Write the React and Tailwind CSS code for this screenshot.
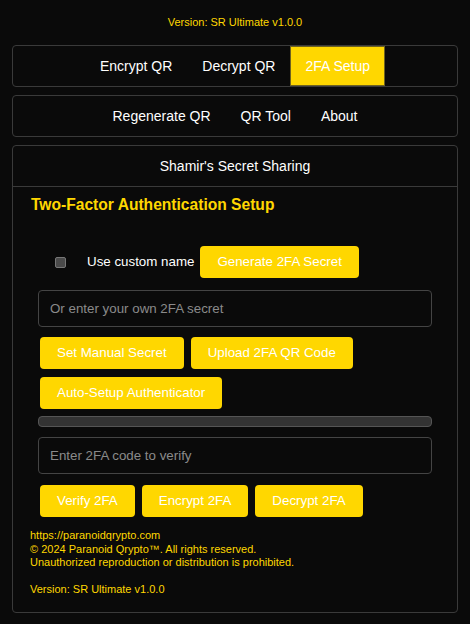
import React, { useState } from 'react';

const YELLOW = 'bg-[#ffd700]';

const NavTab = ({ label, active, onClick }) => (
  <button
    onClick={onClick}
    className={`h-full px-[14px] text-[14px] text-white border ${
      active ? `${YELLOW} border-[#6e6220]` : 'bg-transparent border-transparent'
    }`}
  >
    {label}
  </button>
);

const ActionButton = ({ children }) => (
  <button className={`h-[32px] px-[17px] rounded-[4px] ${YELLOW} text-white text-[13.33px]`}>
    {children}
  </button>
);

const App = () => {
  const [tab, setTab] = useState('2FA Setup');
  const [useCustom, setUseCustom] = useState(false);
  const [secret, setSecret] = useState('');
  const [code, setCode] = useState('');

  return (
    <div className="min-h-screen bg-[#0a0a0a] px-[12px] pb-[12px] font-['Liberation_Sans',Arial,sans-serif]">
      <div className="h-[45px] flex items-center justify-center text-[11px] text-[#ffd700]">
        Version: SR Ultimate v1.0.0
      </div>

      {/* top navs */}
      <div className="h-[42px] border border-[#3a3a3a] rounded-[4px] flex justify-center">
        {['Encrypt QR', 'Decrypt QR', '2FA Setup'].map((t) => (
          <NavTab key={t} label={t} active={tab === t} onClick={() => setTab(t)} />
        ))}
      </div>
      <div className="mt-[8px] h-[42px] border border-[#3a3a3a] rounded-[4px] flex justify-center">
        {['Regenerate QR', 'QR Tool', 'About'].map((t) => (
          <NavTab key={t} label={t} active={tab === t} onClick={() => setTab(t)} />
        ))}
      </div>

      {/* main panel */}
      <div className="mt-[8px] border border-[#3a3a3a] rounded-[4px]">
        <div className="h-[41px] border-b border-[#3a3a3a] flex justify-center">
          <NavTab label="Shamir's Secret Sharing" active={tab === 'Shamir'} onClick={() => setTab('Shamir')} />
        </div>

        <div className="px-[18px] pt-[8px] pb-[15px]">
          <h3 className="text-[15.6px] leading-[20px] font-bold text-[#ffd700]">
            Two-Factor Authentication Setup
          </h3>

          <div className="px-[7px]">
            <div className="mt-[31px] flex items-center h-[32px]">
              <button
                onClick={() => setUseCustom(!useCustom)}
                className={`ml-[17px] w-[11px] h-[11px] rounded-[2px] border border-[#777] ${
                  useCustom ? 'bg-[#ffd700]' : 'bg-[#4a4a4a]'
                }`}
              />
              <span className="ml-[21px] text-[13.33px] text-white">Use custom name</span>
              <span className="ml-[6px]">
                <ActionButton>Generate 2FA Secret</ActionButton>
              </span>
            </div>

            <input
              value={secret}
              onChange={(e) => setSecret(e.target.value)}
              placeholder="Or enter your own 2FA secret"
              className="mt-[12px] block w-full h-[37px] px-[11px] bg-[#0a0a0a] border border-[#444] rounded-[4px] text-[13.33px] text-white placeholder:text-[#8a8a8a] outline-none"
            />

            <div className="mt-[10px] ml-[2px] flex flex-wrap gap-x-[7px] gap-y-[8px]">
              <ActionButton>Set Manual Secret</ActionButton>
              <ActionButton>Upload 2FA QR Code</ActionButton>
              <ActionButton>Auto-Setup Authenticator</ActionButton>
            </div>

            <div className="mt-[7px] h-[11px] bg-[#333] border border-[#555] rounded-[4px]" />

            <input
              value={code}
              onChange={(e) => setCode(e.target.value)}
              placeholder="Enter 2FA code to verify"
              className="mt-[10px] block w-full h-[37px] px-[11px] bg-[#0a0a0a] border border-[#444] rounded-[4px] text-[13.33px] text-white placeholder:text-[#8a8a8a] outline-none"
            />

            <div className="mt-[11px] ml-[2px] flex flex-wrap gap-x-[7px]">
              <ActionButton>Verify 2FA</ActionButton>
              <ActionButton>Encrypt 2FA</ActionButton>
              <ActionButton>Decrypt 2FA</ActionButton>
            </div>
          </div>

          <div className="mt-[12px] -ml-[1px] text-[11px] leading-[13.5px] text-[#ffd700]">
            <div>https://paranoidqrypto.com</div>
            <div>© 2024 Paranoid Qrypto™. All rights reserved.</div>
            <div>Unauthorized reproduction or distribution is prohibited.</div>
            <div className="mt-[13.5px]">Version: SR Ultimate v1.0.0</div>
          </div>
        </div>
      </div>
    </div>
  );
};

export default App;
